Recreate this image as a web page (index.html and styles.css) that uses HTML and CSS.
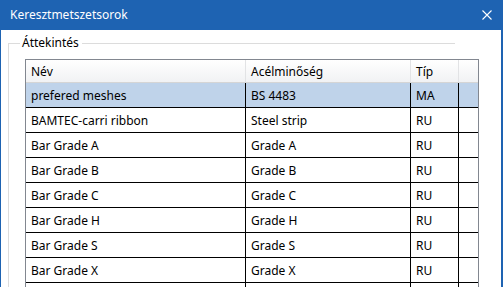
FILE: index.html
```html
<!DOCTYPE html>
<html lang="hu">

<head>
    <meta charset="UTF-8">
    <title>Keresztmetszetsorok</title>
    <link rel="stylesheet" href="styles.css">
</head>

<body>
    <div class="window">
        <div class="titlebar">
            <span class="title">Keresztmetszetsorok</span>
            <svg class="close" width="10" height="10" viewBox="0 0 10 10">
                <path d="M0.5 0.5 L9.5 9.5 M9.5 0.5 L0.5 9.5" stroke="#fff" stroke-width="1.1" fill="none"/>
            </svg>
        </div>

        <fieldset class="group">
            <legend>Áttekintés</legend>
            <table class="grid">
                <thead>
                    <tr>
                        <th class="col-name">Név</th>
                        <th class="col-grade">Acélminőség</th>
                        <th class="col-type">Típ</th>
                        <th class="col-fill"></th>
                    </tr>
                </thead>
                <tbody>
                    <tr class="selected">
                        <td>prefered meshes</td>
                        <td>BS 4483</td>
                        <td>MA</td>
                        <td></td>
                    </tr>
                    <tr>
                        <td>BAMTEC-carri ribbon</td>
                        <td>Steel strip</td>
                        <td>RU</td>
                        <td></td>
                    </tr>
                    <tr>
                        <td>Bar Grade A</td>
                        <td>Grade A</td>
                        <td>RU</td>
                        <td></td>
                    </tr>
                    <tr>
                        <td>Bar Grade B</td>
                        <td>Grade B</td>
                        <td>RU</td>
                        <td></td>
                    </tr>
                    <tr>
                        <td>Bar Grade C</td>
                        <td>Grade C</td>
                        <td>RU</td>
                        <td></td>
                    </tr>
                    <tr>
                        <td>Bar Grade H</td>
                        <td>Grade H</td>
                        <td>RU</td>
                        <td></td>
                    </tr>
                    <tr>
                        <td>Bar Grade S</td>
                        <td>Grade S</td>
                        <td>RU</td>
                        <td></td>
                    </tr>
                    <tr>
                        <td>Bar Grade X</td>
                        <td>Grade X</td>
                        <td>RU</td>
                        <td></td>
                    </tr>
                    <!-- következő sor, a képen már nem látszik -->
                    <tr>
                        <td></td>
                        <td></td>
                        <td></td>
                        <td></td>
                    </tr>
                </tbody>
            </table>
        </fieldset>
    </div>
</body>
</html>
```

FILE: styles.css
```css
html, body {
    margin: 0;
    padding: 0;
    overflow: hidden;
}

body {
    font-family: "Noto Sans", "Open Sans", sans-serif;
    font-size: 12px;
    color: #000;
    background-color: #fff;
}

.window {
    width: 503px;
    height: 287px;
    box-sizing: border-box;
    border-left: 1px solid #1e63b2;
    border-right: 2px solid #1e63b2;
    overflow: hidden;
    background-color: #fff;
}

.titlebar {
    height: 30px;
    margin-left: -1px;
    margin-right: -2px;
    background-color: #1e63b2;
    color: #fff;
    display: flex;
    align-items: center;
    justify-content: space-between;
    padding: 0 11px 0 10px;
}

.title {
    font-size: 12px;
    line-height: 16px;
}

.close {
    display: block;
}

.group {
    margin: 5px 0 0 7px;
    padding: 8px 0 0 16px;
    width: 430px;
    border: 1px solid #dcdcdc;
    border-right: none;
    border-bottom: none;
    min-width: 0;
}

.group legend {
    margin-left: -5px;
    padding: 0 3px 0 2px;
    line-height: 16px;
}

.grid {
    border-collapse: separate;
    border-spacing: 0;
    table-layout: fixed;
    width: 454px;
    border: 1px solid #828790;
    border-bottom: none;
}

.grid th,
.grid td {
    box-sizing: border-box;
    padding: 0 0 0 5px;
    text-align: left;
    font-weight: normal;
    white-space: nowrap;
    overflow: hidden;
}

.grid th {
    height: 23px;
    background: linear-gradient(#ffffff, #f1f2f4);
    border-right: 1px solid #e2e3e5;
    border-bottom: 1px solid #d5d5d5;
}

.grid td {
    height: 25px;
    border-right: 1px solid #000;
    border-bottom: 1px solid #000;
}

.grid th:last-child,
.grid td:last-child {
    border-right: none;
}

.col-name {
    width: 220px;
}

.col-grade {
    width: 165px;
}

.col-type {
    width: 48px;
}

.col-fill {
    width: 19px;
}

.grid tr.selected td {
    background-color: #bfd3ea;
}
```
